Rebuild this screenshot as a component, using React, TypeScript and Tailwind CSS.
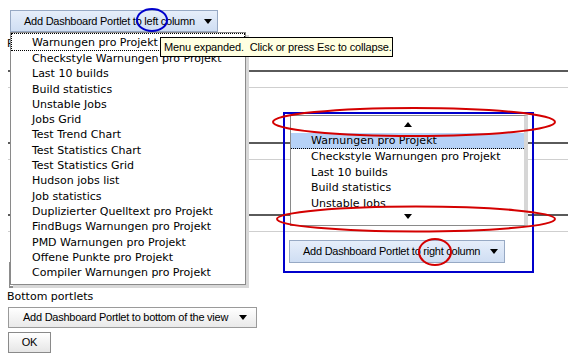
const menuItems = [
  'Warnungen pro Projekt',
  'Checkstyle Warnungen pro Projekt',
  'Last 10 builds',
  'Build statistics',
  'Unstable Jobs',
  'Jobs Grid',
  'Test Trend Chart',
  'Test Statistics Chart',
  'Test Statistics Grid',
  'Hudson jobs list',
  'Job statistics',
  'Duplizierter Quelltext pro Projekt',
  'FindBugs Warnungen pro Projekt',
  'PMD Warnungen pro Projekt',
  'Offene Punkte pro Projekt',
  'Compiler Warnungen pro Projekt',
]

const btnFont = "font-['Liberation_Sans',Arial,sans-serif] text-[11px] tracking-[-0.25px] text-black whitespace-nowrap"
const menuFont = "font-['DejaVu_Sans',Verdana,sans-serif] text-[11px] text-black"

function Caret() {
  return (
    <svg width="8" height="5" viewBox="0 0 8 5" className="shrink-0">
      <path d="M0 0h8L4 5z" fill="#000" />
    </svg>
  )
}

function PortletRow() {
  return (
    <div className="h-[72px] border-t-2 border-[#5a5a5a]">
      <div className="h-[15px]" />
      <div className="border-t border-[#cfcfcf]" />
    </div>
  )
}

export default function App() {
  return (
    <div className="relative w-[568px] h-[358px] overflow-hidden bg-white">
      {/* page underneath */}
      <div className="pt-[10px] pl-[10px]">
        <button className={`flex items-center gap-[9px] h-[22px] w-[208px] pl-[13px] border border-[#97a9c4] bg-gradient-to-b from-[#e6eefa] to-[#cfdef3] ${btnFont}`}>
          <span>Add Dashboard Portlet to left column</span>
          <Caret />
        </button>
      </div>
      {/* label mostly hidden under the open menu */}
      <div className={`ml-[7px] mt-[5px] w-[3px] overflow-hidden whitespace-nowrap leading-[13px] ${menuFont}`}>Right portlets</div>
      <div className="mt-[20px] ml-[8px]">
        <PortletRow />
        <PortletRow />
        <PortletRow />
      </div>
      <div className={`pl-[7px] mt-[4px] leading-[14px] ${menuFont}`}>Bottom portlets</div>
      <div className="pl-[8px] mt-[3px]">
        <button className={`flex items-center gap-[11px] h-[21px] w-[249px] pl-[14px] border border-[#9a9a9a] bg-gradient-to-b from-white to-[#e9e9e9] ${btnFont}`}>
          <span>Add Dashboard Portlet to bottom of the view</span>
          <Caret />
        </button>
        <button className={`mt-[4px] h-[21px] w-[43px] border border-[#8a8a8a] bg-gradient-to-b from-white to-[#e6e6e6] ${btnFont}`}>
          OK
        </button>
      </div>

      {/* expanded left menu */}
      <div className="absolute left-[9px] top-[262px] w-[216px] h-[26px] border-l border-b-2 border-[#8c8c8c]" />
      <div className={`absolute left-[10px] top-[32px] w-[236px] h-[253px] border border-[#8a8a8a] bg-white shadow-[3px_3px_0_#d8d8d8] ${menuFont}`}>
        <div className="h-[18px] border border-dotted border-black pl-[20px] leading-[17px]">{menuItems[0]}</div>
        {menuItems.slice(1).map((m) => (
          <div key={m} className="h-[15.3px] pl-[21px] leading-[15.3px] whitespace-nowrap">{m}</div>
        ))}
      </div>

      {/* tooltip */}
      <div className="absolute left-[160px] top-[37px] h-[20px] w-[233px] border border-black bg-[#ffffe1] pl-[3px] leading-[18px] font-['Liberation_Sans',Arial,sans-serif] text-[11px] tracking-[-0.15px] whitespace-pre">
        {'Menu expanded.  Click or press Esc to collapse.'}
      </div>

      {/* right column annotation */}
      <div className="absolute left-[283px] top-[112px] w-[251px] h-[161px] border-2 border-[#0000cc]" />
      <div className={`absolute left-[290px] top-[115px] w-[238px] h-[111px] overflow-hidden border border-[#8a8a8a] border-r-[4px] border-r-[#d6d6d6] bg-white ${menuFont}`}>
        <div className="h-[17px] flex items-center justify-center">
          <svg width="8" height="5" viewBox="0 0 8 5"><path d="M4 0l4 5H0z" fill="#000" /></svg>
        </div>
        <div className="h-[16px] bg-[#b6d2f7] border-b border-dotted border-black pl-[20px] leading-[15px]">{menuItems[0]}</div>
        {menuItems.slice(1, 6).map((m) => (
          <div key={m} className="h-[15.5px] pl-[20px] leading-[15.5px] whitespace-nowrap">{m}</div>
        ))}
        <div className="absolute left-0 right-0 bottom-0 h-[18px] bg-white flex items-center justify-center">
          <Caret />
        </div>
      </div>
      <button className={`absolute left-[289px] top-[240px] flex items-center gap-[10px] h-[23px] w-[216px] pl-[13px] border border-[#97a9c4] bg-gradient-to-b from-[#e6eefa] to-[#cfdef3] ${btnFont}`}>
        <span>Add Dashboard Portlet to right column</span>
        <Caret />
      </button>

      {/* markup ellipses */}
      <svg className="absolute left-0 top-0 pointer-events-none" width="568" height="358">
        <ellipse cx="152" cy="20" rx="15" ry="11" fill="none" stroke="#0000cc" strokeWidth="2" />
        <ellipse cx="414" cy="122" rx="141" ry="14" fill="none" stroke="#d40000" strokeWidth="2" />
        <ellipse cx="416" cy="219" rx="139" ry="12.5" fill="none" stroke="#d40000" strokeWidth="2" />
        <ellipse cx="435" cy="252" rx="16" ry="13" fill="none" stroke="#d40000" strokeWidth="2" />
      </svg>
    </div>
  )
}
